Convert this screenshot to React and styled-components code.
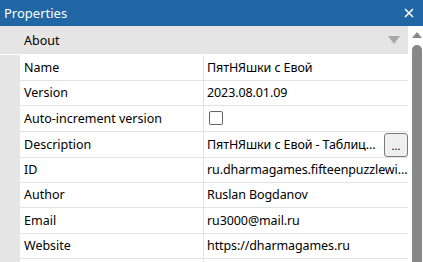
import React from "react";
import styled, { createGlobalStyle } from "styled-components";

const Global = createGlobalStyle`
  html, body {
    margin: 0;
    padding: 0;
    overflow: hidden;
    background: #ffffff;
  }
  body {
    font-family: "Noto Sans", "Open Sans", Arial, sans-serif;
    font-size: 12.5px;
    color: #000;
  }
`;

const Window = styled.div`
  width: 423px;
  height: 262px;
  display: flex;
  flex-direction: column;
  overflow: hidden;
`;

const TitleBar = styled.div`
  height: 26px;
  flex: none;
  background: #2167a5;
  color: #fff;
  display: flex;
  align-items: center;
  justify-content: space-between;
  padding: 0 9px 0 4px;
  font-size: 13px;
`;

const Body = styled.div`
  flex: 1;
  display: flex;
  min-height: 0;
`;

const Grid = styled.div`
  flex: 1;
  display: flex;
  flex-direction: column;
`;

const GroupHeader = styled.div`
  height: 28px;
  flex: none;
  background: #e5e5e5;
  display: flex;
  align-items: center;
  justify-content: space-between;
  padding: 0 8px 0 24px;
  margin-bottom: 1px;
`;

const Row = styled.div`
  display: grid;
  grid-template-columns: 20px 184px 1fr;
  height: 25.5px;
  flex: none;
  box-sizing: border-box;
`;

const Gutter = styled.div`
  background: #e5e5e5;
`;

const NameCell = styled.div`
  border-right: 1px solid #e3e3e3;
  border-bottom: 1px solid #e3e3e3;
  display: flex;
  align-items: center;
  padding-left: 4px;
  white-space: nowrap;
`;

const ValueCell = styled.div`
  border-bottom: 1px solid #e3e3e3;
  display: flex;
  align-items: center;
  padding-left: 3px;
  min-width: 0;
  gap: 6px;
`;

const ValueText = styled.span`
  flex: 1;
  min-width: 0;
  white-space: nowrap;
  overflow: hidden;
  text-overflow: ellipsis;
  letter-spacing: -0.1px;
`;

const CheckBox = styled.span`
  width: 12px;
  height: 12px;
  margin-left: 2px;
  border: 1px solid #666;
  border-radius: 2px;
  background: #fff;
`;

const MoreButton = styled.button`
  width: 24px;
  height: 24px;
  flex: none;
  margin-top: 1px;
  box-sizing: border-box;
  border: 1px solid #7a7a7a;
  border-radius: 3px;
  background: #efefef;
  font-family: inherit;
  font-size: 11px;
  line-height: 1;
  padding: 0 0 5px;
  display: flex;
  align-items: flex-end;
  justify-content: center;
`;

const ScrollBar = styled.div`
  width: 15px;
  flex: none;
  display: flex;
  flex-direction: column;
  align-items: center;
  padding-top: 6px;
  gap: 7px;
`;

const Thumb = styled.div`
  width: 10px;
  flex: 1;
  margin-left: 3px;
  background: #888;
  border-radius: 5px 5px 0 0;
`;

const rows = [
  { name: "Name", value: "ПятНЯшки с Евой" },
  { name: "Version", value: "2023.08.01.09" },
  { name: "Auto-increment version", check: true },
  { name: "Description", value: "ПятНЯшки с Евой - Таблица пятнашки", more: true },
  { name: "ID", value: "ru.dharmagames.fifteenpuzzlewithevanew" },
  { name: "Author", value: "Ruslan Bogdanov" },
  { name: "Email", value: "ru3000@mail.ru" },
  { name: "Website", value: "https://dharmagames.ru" },
  { name: "", value: "" },
];

export default function App() {
  return (
    <Window>
      <Global />
      <TitleBar>
        <span>Properties</span>
        <svg width="10" height="10" viewBox="0 0 10 10">
          <path d="M1 1L9 9M9 1L1 9" stroke="#fff" strokeWidth="1.6" />
        </svg>
      </TitleBar>
      <Body>
        <Grid>
          <GroupHeader>
            <span>About</span>
            <svg width="12" height="8" viewBox="0 0 12 8">
              <path d="M0 0H12L6 8Z" fill="#a8a8a8" />
            </svg>
          </GroupHeader>
          {rows.map((r, i) => (
            <Row key={i}>
              <Gutter />
              <NameCell>{r.name}</NameCell>
              <ValueCell>
                {r.check ? <CheckBox /> : <ValueText>{r.value}</ValueText>}
                {r.more && <MoreButton>...</MoreButton>}
              </ValueCell>
            </Row>
          ))}
        </Grid>
        <ScrollBar>
          <svg width="10" height="6" viewBox="0 0 10 6" style={{ marginLeft: 3 }}>
            <path d="M0 6L5 0L10 6Z" fill="#888" />
          </svg>
          <Thumb />
        </ScrollBar>
      </Body>
    </Window>
  );
}
